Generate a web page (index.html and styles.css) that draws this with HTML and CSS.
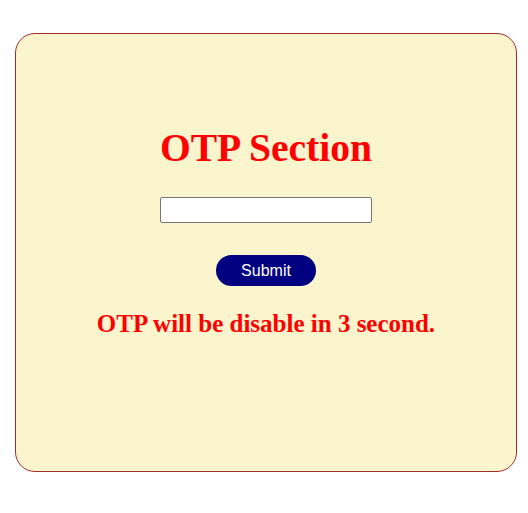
FILE: index.html
```html
<!DOCTYPE html>
<html>
<head>
<meta charset="utf-8">
<link rel="stylesheet" href="styles.css">
</head>
<body>
<div class="page">
  <div class="card">
    <h1 class="title">OTP Section</h1>
    <input class="otp-input" type="text">
    <button class="submit">Submit</button>
    <h2 class="message">OTP will be disable in 3 second.</h2>
  </div>
</div>
</body>
</html>
```

FILE: styles.css
```css
html, body {
  margin: 0;
  padding: 0;
  background: #ffffff;
}
.page {
  padding: 33px 0 0 15px;
}
.card {
  box-sizing: border-box;
  width: 502px;
  height: 439px;
  border: 1px solid #a52a2a;
  border-radius: 20px;
  background: #fbf5ce;
  display: flex;
  flex-direction: column;
  align-items: center;
  padding-top: 91px;
  font-family: "Liberation Serif", "Times New Roman", serif;
}
.title {
  margin: 0;
  font-size: 39.6px;
  font-weight: bold;
  color: #ff0000;
  line-height: 46px;
}
.otp-input {
  box-sizing: border-box;
  margin: 26px 0 0 0;
  width: 212px;
  height: 26px;
  border: 1px solid #767676;
  border-radius: 2px;
  background: #ffffff;
  padding: 0 4px;
}
.submit {
  margin: 32px 0 0 0;
  width: 100px;
  height: 31px;
  border: none;
  border-radius: 16px;
  background: #000080;
  color: #ffffff;
  font-family: "Liberation Sans", Arial, sans-serif;
  font-size: 16px;
  padding: 0;
}
.message {
  margin: 24px 0 0 0;
  font-size: 25px;
  font-weight: bold;
  color: #ff0000;
  line-height: 28px;
}
```
